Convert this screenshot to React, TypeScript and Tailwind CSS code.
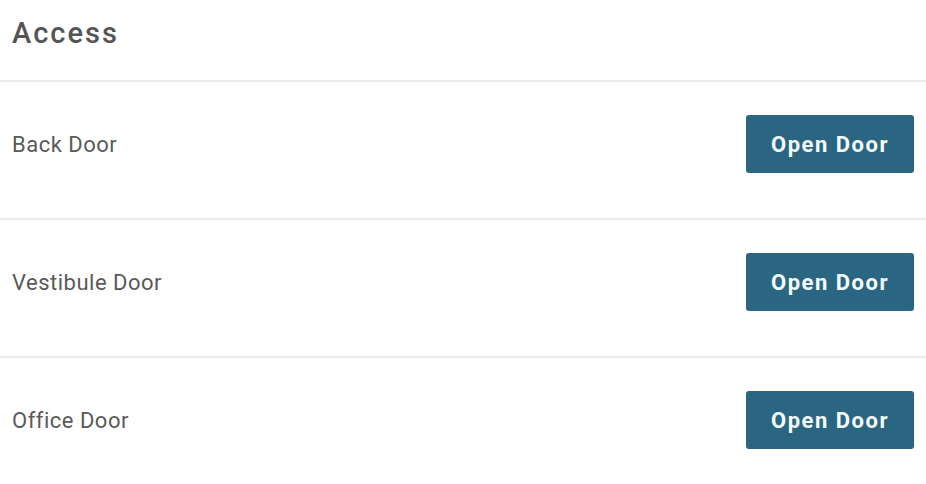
import React from "react";

const doors = ["Back Door", "Vestibule Door", "Office Door"];

export default function App() {
  return (
    <div className="w-[926px] h-[484px] bg-white overflow-hidden" style={{ fontFamily: "Roboto, 'Liberation Sans', sans-serif" }}>
      <div className="h-[82px] border-b-2 border-[#ebebeb] px-[12px] pt-[14px]">
        <h1 className="text-[29px] leading-[38px] font-medium text-[#555555] tracking-[2px]">Access</h1>
      </div>
      {doors.map((d, i) => (
        <div
          key={d}
          className={`h-[138px] flex items-start justify-between pl-[12px] pr-[12px] pt-[33px] ${i < doors.length - 1 ? "border-b-2 border-[#ebebeb]" : ""}`}
        >
          <div className="h-[58px] flex items-center text-[22px] text-[#5a5a5a] tracking-[0.5px]">{d}</div>
          <button className="w-[168px] h-[58px] rounded-[3px] bg-[#2a6581] text-[#f4fbfc] text-[22px] font-bold tracking-[1.5px] flex items-center justify-center">
            Open Door
          </button>
        </div>
      ))}
    </div>
  );
}
